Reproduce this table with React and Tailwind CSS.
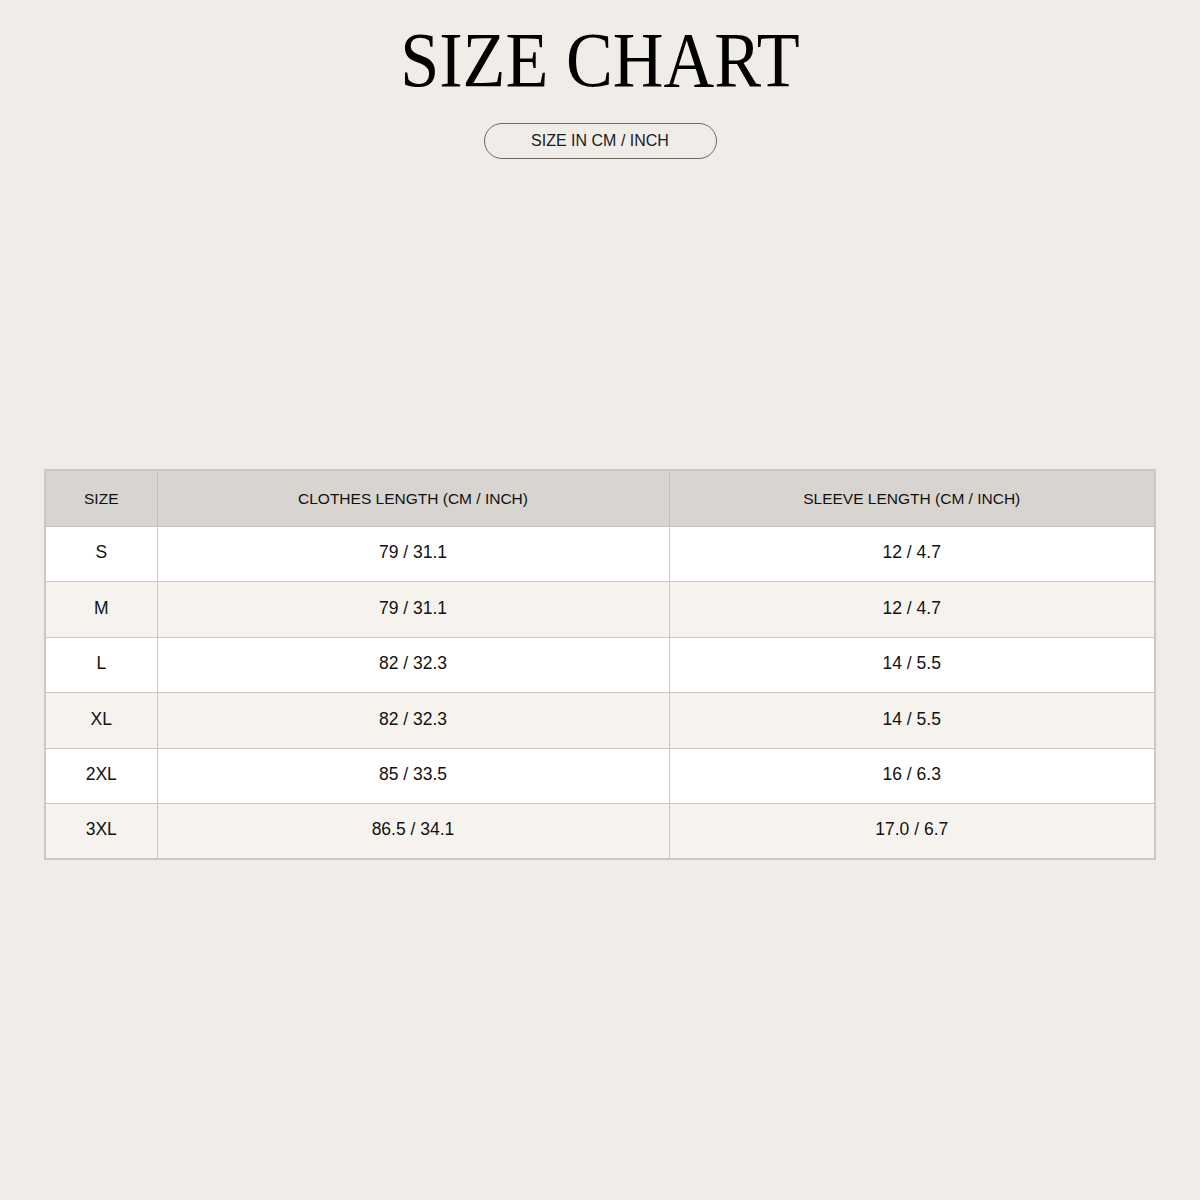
import React from 'react';

const rows = [
    ['S', '79 / 31.1', '12 / 4.7'],
    ['M', '79 / 31.1', '12 / 4.7'],
    ['L', '82 / 32.3', '14 / 5.5'],
    ['XL', '82 / 32.3', '14 / 5.5'],
    ['2XL', '85 / 33.5', '16 / 6.3'],
    ['3XL', '86.5 / 34.1', '17.0 / 6.7'],
];

export default function App() {
    return (
        <div className="w-[1200px] h-[1200px] bg-[#f0ede8] flex flex-col items-center font-['Liberation_Sans',Arial,sans-serif] text-[#111]">
            {/* Title */}
            <h1 className="mt-[16px] font-['Liberation_Serif','Times_New_Roman',serif] text-[78px] leading-[88px] scale-x-[0.9] text-black">
                SIZE CHART
            </h1>
            <div className="mt-[19px] w-[233px] h-[36px] rounded-full border border-[#6b6866] flex items-center justify-center text-[16px] text-[#1a1a1a]">
                SIZE IN CM / INCH
            </div>

            {/* Table */}
            <table className="mt-[310px] w-[1112px] border-collapse border-2 border-[#cbc7c3] text-center">
                <thead>
                    <tr className="bg-[#d8d4d0] h-[56px] text-[15.5px]">
                        <th className="w-[112px] font-normal border border-[#c4c0bc]">SIZE</th>
                        <th className="w-[512px] font-normal border border-[#c4c0bc]">CLOTHES LENGTH (CM / INCH)</th>
                        <th className="font-normal border border-[#c4c0bc]">SLEEVE LENGTH (CM / INCH)</th>
                    </tr>
                </thead>
                <tbody>
                    {rows.map((r, i) => (
                        <tr key={r[0]} className={(i % 2 === 0 ? 'bg-white' : 'bg-[#f6f3ee]') + ' h-[55.5px] text-[17.5px]'}>
                            {r.map((c, j) => (
                                <td key={j} className="border border-[#cbc7c3] pb-[3px]">{c}</td>
                            ))}
                        </tr>
                    ))}
                </tbody>
            </table>
        </div>
    );
}
